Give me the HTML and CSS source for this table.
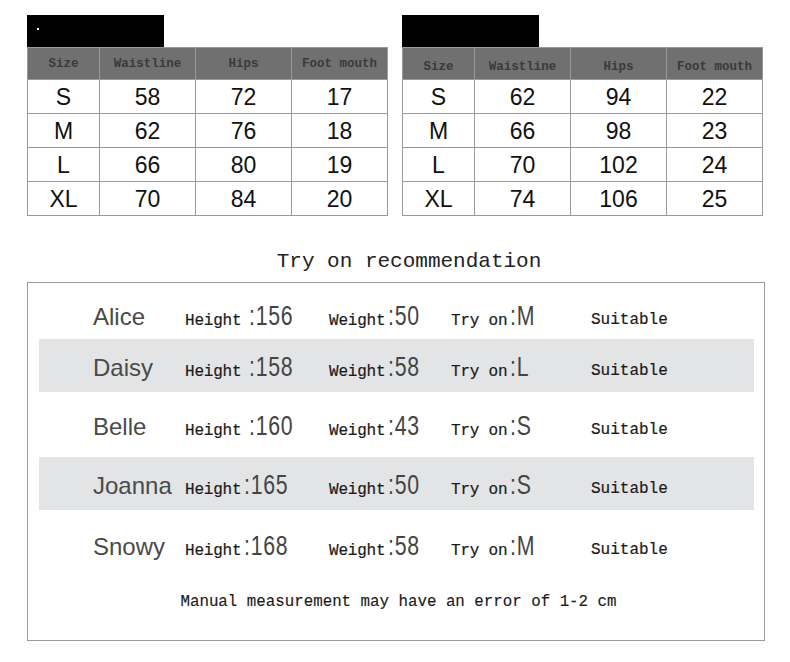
FILE: index.html
```
<!DOCTYPE html>
<html>
<head>
<meta charset="utf-8">
<link rel="stylesheet" href="styles.css">
</head>
<body>
<div class="page">
  <div class="charts">
    <div class="chart">
      <div class="tab"><span class="dot"></span></div>
      <table class="size-table">
        <colgroup><col class="c1"><col class="c2"><col class="c3"><col class="c4"></colgroup>
        <thead><tr><th>Size</th><th>Waistline</th><th>Hips</th><th>Foot mouth</th></tr></thead>
        <tbody>
          <tr><td>S</td><td>58</td><td>72</td><td>17</td></tr>
          <tr><td>M</td><td>62</td><td>76</td><td>18</td></tr>
          <tr><td>L</td><td>66</td><td>80</td><td>19</td></tr>
          <tr><td>XL</td><td>70</td><td>84</td><td>20</td></tr>
        </tbody>
      </table>
    </div>
    <div class="chart">
      <div class="tab"></div>
      <table class="size-table second">
        <colgroup><col class="c1"><col class="c2"><col class="c3"><col class="c4"></colgroup>
        <thead><tr><th>Size</th><th>Waistline</th><th>Hips</th><th>Foot mouth</th></tr></thead>
        <tbody>
          <tr><td>S</td><td>62</td><td>94</td><td>22</td></tr>
          <tr><td>M</td><td>66</td><td>98</td><td>23</td></tr>
          <tr><td>L</td><td>70</td><td>102</td><td>24</td></tr>
          <tr><td>XL</td><td>74</td><td>106</td><td>25</td></tr>
        </tbody>
      </table>
    </div>
  </div>

  <h2 class="title">Try on recommendation</h2>

  <div class="rec">
    <div class="row r1">
      <span class="name">Alice</span>
      <span class="field"><span class="lbl">Height</span><span class="val sp">:156</span></span>
      <span class="field"><span class="lbl">Weight</span><span class="val">:50</span></span>
      <span class="field"><span class="lbl">Try on</span><span class="val">:M</span></span>
      <span class="fit">Suitable</span>
    </div>
    <div class="row stripe r2">
      <span class="name">Daisy</span>
      <span class="field"><span class="lbl">Height</span><span class="val sp">:158</span></span>
      <span class="field"><span class="lbl">Weight</span><span class="val">:58</span></span>
      <span class="field"><span class="lbl">Try on</span><span class="val">:L</span></span>
      <span class="fit">Suitable</span>
    </div>
    <div class="row r3">
      <span class="name">Belle</span>
      <span class="field"><span class="lbl">Height</span><span class="val sp">:160</span></span>
      <span class="field"><span class="lbl">Weight</span><span class="val">:43</span></span>
      <span class="field"><span class="lbl">Try on</span><span class="val">:S</span></span>
      <span class="fit">Suitable</span>
    </div>
    <div class="row stripe r4">
      <span class="name">Joanna</span>
      <span class="field"><span class="lbl">Height</span><span class="val">:165</span></span>
      <span class="field"><span class="lbl">Weight</span><span class="val">:50</span></span>
      <span class="field"><span class="lbl">Try on</span><span class="val">:S</span></span>
      <span class="fit">Suitable</span>
    </div>
    <div class="row r5">
      <span class="name">Snowy</span>
      <span class="field"><span class="lbl">Height</span><span class="val">:168</span></span>
      <span class="field"><span class="lbl">Weight</span><span class="val">:58</span></span>
      <span class="field"><span class="lbl">Try on</span><span class="val">:M</span></span>
      <span class="fit">Suitable</span>
    </div>
    <p class="note">Manual measurement may have an error of 1-2 cm</p>
  </div>
</div>
</body>
</html>
```
FILE: styles.css
```
html, body {
  margin: 0;
  padding: 0;
  background: #ffffff;
}

.page {
  width: 790px;
  padding-top: 15px;
  font-family: "Liberation Sans", Arial, sans-serif;
  color: #111;
}

.charts {
  display: flex;
  gap: 14px;
  padding-left: 27px;
}

.chart {
  display: flex;
  flex-direction: column;
}

.tab {
  width: 137px;
  height: 32px;
  background: #000;
  position: relative;
}

.dot {
  position: absolute;
  left: 10px;
  top: 13px;
  width: 2px;
  height: 2px;
  background: #fff;
}

.size-table {
  border-collapse: collapse;
  width: 361px;
  table-layout: fixed;
}

.c1 { width: 72px; }
.c2 { width: 96px; }
.c3 { width: 96px; }
.c4 { width: 96px; }

.size-table th,
.size-table td {
  border: 1px solid #9a9a9a;
  text-align: center;
  padding: 0;
}

.size-table th {
  background: #707070;
  height: 31px;
  font-family: "Liberation Mono", "DejaVu Sans Mono", monospace;
  font-size: 12.5px;
  font-weight: bold;
  color: #3a3a3a;
  vertical-align: middle;
}

.size-table.second th {
  padding-top: 6px;
  height: 25px;
}

.size-table td {
  height: 31px;
  padding-top: 2px;
  font-size: 23px;
  color: #111;
  line-height: 31px;
}

.title {
  margin: 33px 0 0;
  text-align: center;
  font-family: "Liberation Mono", "DejaVu Sans Mono", monospace;
  font-weight: normal;
  font-size: 21px;
  line-height: 26px;
  color: #222;
  padding-left: 28px;
}

.rec {
  margin: 7px 0 0 27px;
  width: 715px;
  height: 357px;
  border: 1px solid #9c9c9c;
  padding: 0 10px 0 11px;
  display: flex;
  flex-direction: column;
}

.row {
  display: grid;
  grid-template-columns: 92px 144px 122px 140px 1fr;
  align-items: center;
  padding-left: 54px;
  color: #222;
  box-sizing: border-box;
}

.stripe {
  background: #e3e4e6;
}

.r1 { height: 56px; padding-top: 8px; }
.r2 { height: 53px; }
.r3 { height: 65px; }
.r4 { height: 53px; }
.r5 { height: 64px; padding-top: 5px; }

.name {
  font-family: "Liberation Sans", Arial, sans-serif;
  font-size: 24px;
  color: #4a4a4a;
  position: relative;
  top: 2px;
}

.field {
  display: flex;
  align-items: baseline;
  font-family: "Liberation Mono", "DejaVu Sans Mono", monospace;
  position: relative;
  top: 1px;
}

.lbl {
  font-size: 16px;
  color: #1a1a1a;
  -webkit-text-stroke: 0.2px #1a1a1a;
  letter-spacing: -0.2px;
}

.val {
  display: inline-block;
  font-family: "Liberation Sans", Arial, sans-serif;
  font-size: 28px;
  color: #444;
  transform: scaleX(0.76);
  transform-origin: 0 50%;
  letter-spacing: 1px;
  margin-left: 3px;
}

.val.sp {
  margin-left: 8px;
}

.fit {
  font-family: "Liberation Mono", "DejaVu Sans Mono", monospace;
  font-size: 16px;
  color: #1a1a1a;
  -webkit-text-stroke: 0.2px #1a1a1a;
  position: relative;
  top: 5px;
}

.note {
  margin: 19px 0 0;
  text-align: center;
  font-family: "Liberation Mono", "DejaVu Sans Mono", monospace;
  font-size: 15.8px;
  color: #1a1a1a;
  -webkit-text-stroke: 0.15px #1a1a1a;
  padding-left: 4px;
}
```
